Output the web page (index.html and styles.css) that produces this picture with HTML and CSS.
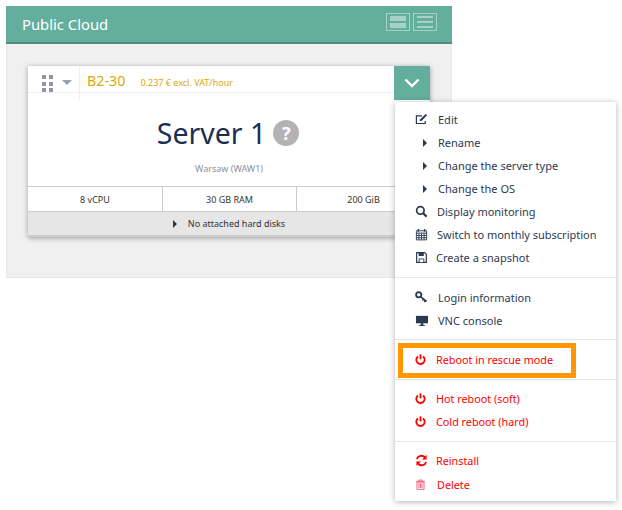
FILE: index.html
```html
<!DOCTYPE html>
<html lang="en">
<head>
  <meta charset="UTF-8">
  <title>Public Cloud</title>
  <link rel="stylesheet" href="styles.css">
</head>
<body>
  <svg class="defs" width="0" height="0">
    <symbol id="power" viewBox="0 0 12 12">
      <path d="M3.300 2.600a4.600 4.600 0 1 0 5.400 0" fill="none" stroke="currentColor" stroke-width="2"/>
      <path d="M6 .4v5.400" fill="none" stroke="currentColor" stroke-width="2"/>
    </symbol>
    <symbol id="caret" viewBox="0 0 4 8">
      <path d="M0 0l4 4-4 4z" fill="currentColor"/>
    </symbol>
  </svg>

  <div class="panel">
    <div class="panel-head">
      <h1>Public Cloud</h1>
      <div class="views">
        <span class="view view-large"><i></i><i></i></span>
        <span class="view view-small"><i></i><i></i><i></i></span>
      </div>
    </div>

    <div class="panel-body">
      <div class="card">
        <div class="card-top">
          <div class="handle">
            <div class="dots"><i></i><i></i><i></i><i></i><i></i><i></i></div>
            <span class="arrow"></span>
          </div>
          <div class="plan">
            <span class="plan-name">B2-30</span>
            <span class="plan-price">0.237 € excl. VAT/hour</span>
          </div>
          <button class="toggle">
            <svg width="16" height="10" viewBox="0 0 16 10"><path d="M1.500 1.500L8 8l6.500-6.500" fill="none" stroke="#fff" stroke-width="2.400"/></svg>
          </button>
        </div>

        <div class="server-name">Server 1 <span class="help">?</span></div>
        <div class="server-place">Warsaw (WAW1)</div>

        <div class="specs">
          <div>8 vCPU</div>
          <div>30 GB RAM</div>
          <div>200 GiB</div>
        </div>
        <div class="disks">
          <svg class="caret" width="4" height="8"><use href="#caret"/></svg>
          No attached hard disks
        </div>
      </div>
    </div>
  </div>

  <div class="menu">
    <div class="group group-first">
      <a class="item">
        <svg class="ico" viewBox="0 0 14 14"><path d="M11 8.500v2.800H1.500V3.200h6" fill="none" stroke="currentColor" stroke-width="1.300"/><path d="M5 9l.6-2.400L11.500 1 13 2.500 7.300 8.400z" fill="currentColor"/></svg>
        <span>Edit</span>
      </a>
      <a class="item sub"><svg class="caret" width="4" height="8"><use href="#caret"/></svg><span>Rename</span></a>
      <a class="item sub"><svg class="caret" width="4" height="8"><use href="#caret"/></svg><span>Change the server type</span></a>
      <a class="item sub"><svg class="caret" width="4" height="8"><use href="#caret"/></svg><span>Change the OS</span></a>
      <a class="item tight">
        <svg class="ico" viewBox="0 0 14 14"><circle cx="5.800" cy="5.800" r="4" fill="none" stroke="currentColor" stroke-width="1.900"/><path d="M8.800 8.800l3.700 3.700" stroke="currentColor" stroke-width="2.400"/></svg>
        <span>Display monitoring</span>
      </a>
      <a class="item tight">
        <svg class="ico" viewBox="0 0 14 14"><path d="M1.500 3h11v9.800h-11zM1.500 5.500h11M1.500 8h11M1.500 10.500h11M4.200 5.500v7M7 5.500v7M9.800 5.500v7" fill="none" stroke="currentColor"/><path d="M3.700 1v3M10.300 1v3" stroke="currentColor" stroke-width="1.500"/></svg>
        <span>Switch to monthly subscription</span>
      </a>
      <a class="item tighter">
        <svg class="ico" viewBox="0 0 14 14"><path d="M1.800 1.800h8.700l1.700 1.700v8.700H1.800z" fill="none" stroke="currentColor" stroke-width="1.300"/><path d="M4 2h5.500v3.500H4zM4 8h6v4H4z" fill="currentColor"/><path d="M5 9h4v3H5z" fill="#fff"/></svg>
        <span>Create a snapshot</span>
      </a>
    </div>

    <div class="group group-login">
      <a class="item">
        <svg class="ico" viewBox="0 0 14 14"><circle cx="4" cy="4" r="2.800" fill="none" stroke="currentColor" stroke-width="2"/><path d="M6.200 6.200l6.300 5M9.300 8.700l-1.300 1.500M11.300 10.300l-1.300 1.500" fill="none" stroke="currentColor" stroke-width="1.700"/></svg>
        <span>Login information</span>
      </a>
      <a class="item tight">
        <svg class="ico ico-wide" viewBox="0 0 14 14"><path d="M.5 2h13v8H.5z" fill="currentColor"/><path d="M5.500 10h3v2h-3zM3.500 12h7v1h-7z" fill="currentColor"/></svg>
        <span>VNC console</span>
      </a>
    </div>

    <div class="group danger group-rescue">
      <a class="item">
        <svg class="ico ico-power"><use href="#power"/></svg>
        <span>Reboot in rescue mode</span>
      </a>
      <div class="mark"></div>
    </div>

    <div class="group danger group-reboot">
      <a class="item"><svg class="ico ico-power"><use href="#power"/></svg><span>Hot reboot (soft)</span></a>
      <a class="item"><svg class="ico ico-power"><use href="#power"/></svg><span>Cold reboot (hard)</span></a>
    </div>

    <div class="group danger group-last">
      <a class="item tighter">
        <svg class="ico" viewBox="0 0 14 14"><path d="M2 5.500A5 5 0 0 1 10.500 3.500M12 8.500A5 5 0 0 1 3.500 10.500" fill="none" stroke="currentColor" stroke-width="2"/><path d="M12.500 1v5h-5zM1.500 13V8h5z" fill="currentColor"/></svg>
        <span>Reinstall</span>
      </a>
      <a class="item delete">
        <svg class="ico ico-trash" viewBox="0 0 14 14"><path d="M2.500 4h9v9.200h-9zM5 5.500v6M7 5.500v6M9 5.500v6" fill="none" stroke="currentColor" stroke-width="1.100"/><path d="M1.500 3h11M5 3V1.300h4V3" fill="none" stroke="currentColor" stroke-width="1.100"/></svg>
        <span>Delete</span>
      </a>
    </div>
  </div>
</body>
</html>
```

FILE: styles.css
```css
* {
  box-sizing: border-box;
}

body {
  margin: 0;
  width: 622px;
  height: 510px;
  overflow: hidden;
  position: relative;
  background-color: #fff;
  color: #333;
  font-family: 'Noto Sans', sans-serif;
}

.defs {
  position: absolute;
}

/* panel */
.panel {
  width: 446px;
  margin: 6px 0 0 6px;
}

.panel-head {
  height: 38px;
  padding: 0 15px 0 16px;
  display: flex;
  align-items: center;
  justify-content: space-between;
  background-color: #63ae9d;
  border-bottom: 2px solid #4f8e80;
}

.panel-head h1 {
  margin: 0;
  font-size: 14.800px;
  font-weight: 400;
  color: #fff;
}

.views {
  display: flex;
  gap: 3px;
  margin-top: -4px;
}

.view {
  width: 24px;
  height: 18px;
  padding: 2px 3px;
  display: flex;
  flex-direction: column;
  justify-content: space-between;
  border: 1px solid #a6d1c7;
}

.view i {
  display: block;
  background-color: #a6d1c7;
}

.view-large i {
  height: 5px;
}

.view-small i {
  height: 2px;
}

.panel-body {
  height: 234px;
  padding: 22px 21px 0 21px;
  background-color: #f0f0f0;
  border: 1px solid #e8e8e8;
  border-top: none;
}

/* server card */
.card {
  width: 402px;
  background-color: #fff;
  box-shadow: 0 1px 5px rgba(0, 0, 0, 0.35);
}

.card-top {
  height: 27px;
  display: flex;
  position: relative;
  border-bottom: 1px solid #eee;
}

.handle {
  width: 52px;
  height: 34px;
  padding: 9px 0 0 14px;
  display: flex;
  gap: 9px;
  border-right: 1px solid #eee;
}

.dots {
  width: 11px;
  height: 17px;
  display: grid;
  grid-template-columns: 4px 4px;
  grid-template-rows: repeat(3, 4px);
  gap: 2.500px 3px;
}

.dots i {
  background-color: #8e97a3;
}

.arrow {
  margin-top: 5px;
  width: 0;
  height: 0;
  border-left: 5px solid transparent;
  border-right: 5px solid transparent;
  border-top: 5px solid #98a1ad;
}

.plan {
  padding: 5px 0 0 7px;
  color: #d9a908;
  display: flex;
  align-items: baseline;
  gap: 15px;
}

.plan-name {
  font-size: 14.300px;
}

.plan-price {
  font-size: 9px;
}

.toggle {
  position: absolute;
  top: 0;
  right: 0;
  width: 36px;
  height: 34px;
  padding: 0;
  border: none;
  background-color: #63ae9d;
}

.server-name {
  margin-top: 20px;
  height: 40px;
  display: flex;
  align-items: center;
  justify-content: center;
  gap: 7px;
  padding-right: 2px;
  font-size: 28.500px;
  color: #1b2e4f;
}

.help {
  width: 26px;
  height: 26px;
  display: flex;
  align-items: center;
  justify-content: center;
  border-radius: 50%;
  background-color: #b3b3b3;
  color: #fff;
  font-size: 18px;
  font-weight: 700;
}

.server-place {
  margin-top: 9px;
  height: 16px;
  text-align: center;
  font-size: 9px;
  color: #8c93a0;
}

.specs {
  margin-top: 8px;
  height: 26px;
  display: grid;
  grid-template-columns: repeat(3, 1fr);
  border-top: 1px solid #ccc;
  border-bottom: 1px solid #ccc;
}

.specs div {
  display: flex;
  align-items: center;
  justify-content: center;
  font-size: 9px;
  border-left: 1px solid #ccc;
}

.specs div:first-child {
  border-left: none;
}

.disks {
  height: 25px;
  display: flex;
  align-items: center;
  justify-content: center;
  gap: 11px;
  font-size: 9px;
  background-color: #e6e6e6;
  border-bottom: 2px solid #ccc;
}

.caret {
  flex: none;
}

/* dropdown */
.menu {
  position: absolute;
  top: 102px;
  left: 395px;
  width: 221px;
  height: 399px;
  background-color: #fff;
  box-shadow: 0 1px 6px rgba(0, 0, 0, 0.3);
  font-size: 11px;
  color: #2c3a4f;
}

.group {
  border-bottom: 1px solid #e6e6e6;
}

.group:last-child {
  border-bottom: none;
}

.group-first {
  height: 176px;
  padding-top: 6px;
}

.group-login {
  height: 62px;
  padding-top: 8px;
}

.group-rescue {
  height: 40px;
  padding-top: 8px;
  position: relative;
}

.group-reboot {
  height: 62px;
  padding-top: 7px;
}

.group-last {
  padding-top: 7px;
}

.item {
  height: 23px;
  padding-left: 20px;
  display: flex;
  align-items: center;
  gap: 10px;
}

.item.sub {
  padding-left: 28px;
  gap: 11px;
}

.item.tight {
  gap: 9px;
}

.item.tighter {
  gap: 8px;
}

.item.delete {
  margin-top: 1px;
  gap: 11px;
}

.ico {
  width: 13px;
  height: 13px;
  flex: none;
}

.ico-wide {
  width: 14px;
}

.ico-power {
  width: 11px;
}

.ico-trash {
  width: 11px;
  color: #f0506e;
}

.danger {
  color: #f00;
  font-size: 10.800px;
}

/* orange annotation around the rescue item */
.mark {
  position: absolute;
  top: 3px;
  left: 3px;
  width: 178px;
  height: 35px;
  border: 5px solid #ff9800;
}
```
